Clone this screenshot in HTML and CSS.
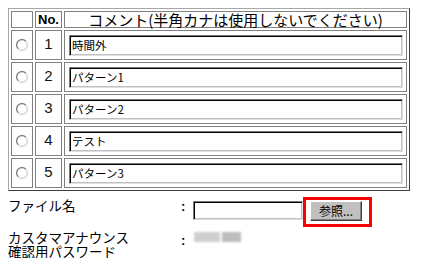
FILE: index.html
```html
<!DOCTYPE html>
<html lang="ja">
<head>
<meta charset="utf-8">
<title>コメント</title>
<link rel="stylesheet" href="styles.css">
</head>
<body>
<table class="list">
  <tr class="head">
    <th class="c-radio"></th>
    <th class="c-no">No.</th>
    <th class="c-comment">コメント(半角カナは使用しないでください)</th>
  </tr>
  <tr>
    <td class="c-radio"><svg class="radio" width="12" height="12" viewBox="0 0 12 12"><circle cx="6" cy="6" r="4.6" fill="#fff"/><path d="M2.2 9.8A5.3 5.3 0 0 1 9.8 2.2" stroke="#7a7a7a" stroke-width="1.3" fill="none"/><path d="M9.8 2.2A5.3 5.3 0 0 1 2.2 9.8" stroke="#d4d4d4" stroke-width="1.3" fill="none"/></svg></td>
    <td class="c-no">1</td>
    <td class="c-comment"><input class="text" type="text" value="時間外"></td>
  </tr>
  <tr>
    <td class="c-radio"><svg class="radio" width="12" height="12" viewBox="0 0 12 12"><circle cx="6" cy="6" r="4.6" fill="#fff"/><path d="M2.2 9.8A5.3 5.3 0 0 1 9.8 2.2" stroke="#7a7a7a" stroke-width="1.3" fill="none"/><path d="M9.8 2.2A5.3 5.3 0 0 1 2.2 9.8" stroke="#d4d4d4" stroke-width="1.3" fill="none"/></svg></td>
    <td class="c-no">2</td>
    <td class="c-comment"><input class="text" type="text" value="パターン1"></td>
  </tr>
  <tr>
    <td class="c-radio"><svg class="radio" width="12" height="12" viewBox="0 0 12 12"><circle cx="6" cy="6" r="4.6" fill="#fff"/><path d="M2.2 9.8A5.3 5.3 0 0 1 9.8 2.2" stroke="#7a7a7a" stroke-width="1.3" fill="none"/><path d="M9.8 2.2A5.3 5.3 0 0 1 2.2 9.8" stroke="#d4d4d4" stroke-width="1.3" fill="none"/></svg></td>
    <td class="c-no">3</td>
    <td class="c-comment"><input class="text" type="text" value="パターン2"></td>
  </tr>
  <tr>
    <td class="c-radio"><svg class="radio" width="12" height="12" viewBox="0 0 12 12"><circle cx="6" cy="6" r="4.6" fill="#fff"/><path d="M2.2 9.8A5.3 5.3 0 0 1 9.8 2.2" stroke="#7a7a7a" stroke-width="1.3" fill="none"/><path d="M9.8 2.2A5.3 5.3 0 0 1 2.2 9.8" stroke="#d4d4d4" stroke-width="1.3" fill="none"/></svg></td>
    <td class="c-no">4</td>
    <td class="c-comment"><input class="text" type="text" value="テスト"></td>
  </tr>
  <tr>
    <td class="c-radio"><svg class="radio" width="12" height="12" viewBox="0 0 12 12"><circle cx="6" cy="6" r="4.6" fill="#fff"/><path d="M2.2 9.8A5.3 5.3 0 0 1 9.8 2.2" stroke="#7a7a7a" stroke-width="1.3" fill="none"/><path d="M9.8 2.2A5.3 5.3 0 0 1 2.2 9.8" stroke="#d4d4d4" stroke-width="1.3" fill="none"/></svg></td>
    <td class="c-no">5</td>
    <td class="c-comment"><input class="text" type="text" value="パターン3"></td>
  </tr>
</table>

<div class="form">
  <div class="row row-file">
    <span class="label">ファイル名</span>
    <span class="colon">:</span>
    <div class="field">
      <input class="file-input" type="text">
      <span class="browse-box"><button class="browse" type="button">参照...</button></span>
    </div>
  </div>
  <div class="row row-pass">
    <span class="label">カスタマアナウンス<br>確認用パスワード</span>
    <span class="colon">:</span>
    <span class="secret"><span class="blur blur-a"></span><span class="blur blur-b"></span></span>
  </div>
</div>
</body>
</html>
```

FILE: styles.css
```css
html, body {
  background: #ffffff;
}

body {
  margin: 8px;
  font-family: "Noto Sans CJK JP", sans-serif;
  color: #000;
}

.list {
  border-collapse: separate;
  border-spacing: 2px;
  border: 1px solid;
  border-color: #a8a8a8 #404040 #404040 #a8a8a8;
  table-layout: fixed;
  width: 402px;
}

.list th,
.list td {
  box-sizing: border-box;
  border: 1px solid #808080;
  padding: 0;
}

.list th {
  height: 17px;
  font-weight: normal;
  line-height: 15px;
}

.list td {
  height: 30px;
}

.c-radio {
  width: 22px;
  text-align: center;
}

.c-no {
  width: 27px;
  text-align: center;
  font-family: "Liberation Sans", Arial, sans-serif;
}

th.c-no {
  font-weight: bold;
  font-size: 13px;
}

td.c-no {
  font-size: 15px;
  line-height: 15px;
  padding-bottom: 3px;
  color: #111;
}

th.c-comment {
  font-size: 15px;
  letter-spacing: 0;
}

.radio {
  display: block;
  margin: 0 auto;
}

.text {
  box-sizing: border-box;
  display: block;
  width: 334px;
  height: 21px;
  margin: 0 0 0 4px;
  padding: 0 2px;
  border: 1px solid;
  border-color: #7a7a7a #e0e0e0 #e0e0e0 #7a7a7a;
  box-shadow: inset 1px 1px 0 #000, inset -1px -1px 0 #c0c0c0;
  font-family: "Noto Sans CJK JP", sans-serif;
  font-size: 11.5px;
  color: #000;
  background: #fff;
  outline: none;
}

.form {
  margin-top: 6px;
}

.row {
  display: grid;
  grid-template-columns: 173px 12px auto;
  align-items: start;
}

.label {
  font-size: 13.5px;
  line-height: 13.5px;
}

.colon {
  font-family: "Liberation Sans", Arial, sans-serif;
  font-weight: bold;
  font-size: 13px;
  line-height: 13px;
}

.row-file {
  height: 30px;
}

.row-file .label {
  padding-top: 2px;
}

.row-file .colon {
  padding-top: 3px;
}

.field {
  display: flex;
  align-items: flex-start;
}

.file-input {
  box-sizing: border-box;
  width: 110px;
  height: 19px;
  margin: 4px 0 0 0;
  padding: 0 2px;
  border: 1px solid;
  border-color: #7a7a7a #e0e0e0 #e0e0e0 #7a7a7a;
  box-shadow: inset 1px 1px 0 #000, inset -1px -1px 0 #c0c0c0;
  background: #fff;
  outline: none;
}

.browse-box {
  box-sizing: border-box;
  display: block;
  width: 69px;
  height: 30px;
  border: 3px solid #ff0000;
  padding: 1px 0 0 4px;
}

.browse {
  box-sizing: border-box;
  display: block;
  width: 52px;
  height: 20px;
  margin: 0;
  padding: 0;
  border: 1px solid;
  border-color: #ffffff #404040 #404040 #ffffff;
  box-shadow: inset -1px -1px 0 #808080;
  background: #c0c0c0;
  font-family: "Noto Sans CJK JP", sans-serif;
  font-size: 12px;
  line-height: 16px;
  color: #000;
}

.row-pass {
  margin-top: 4px;
}

.row-pass .colon {
  padding-top: 3px;
}

.secret {
  display: flex;
  margin-top: 1px;
  margin-left: 1px;
}

.blur {
  display: block;
  height: 10px;
  filter: blur(1.2px);
}

.blur-a {
  width: 26px;
  background: #cfcfcf;
}

.blur-b {
  width: 19px;
  margin-left: 2px;
  background: #bdbdbd;
}
```
